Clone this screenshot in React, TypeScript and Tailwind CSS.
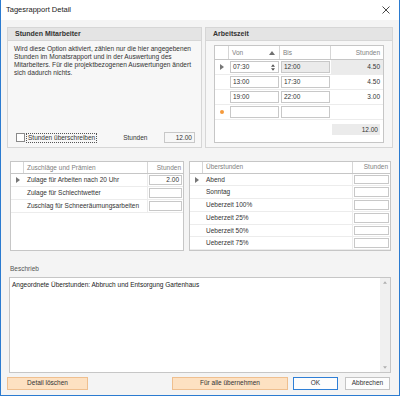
import React from "react";

const font = { fontFamily: '"Liberation Sans", Arial, sans-serif' };

function Tri({ dir = "right", className = "" }: { dir?: "right" | "up" | "down"; className?: string }) {
  const pts = dir === "right" ? "0,0 4,3 0,6" : dir === "up" ? "0,4 3,0 6,4" : "0,0 6,0 3,4";
  const w = dir === "right" ? 4 : 6;
  const h = dir === "right" ? 6 : 4;
  return (
    <svg width={w} height={h} viewBox={`0 0 ${w} ${h}`} className={className}>
      <polygon points={pts} fill="currentColor" />
    </svg>
  );
}

function GroupBox({ title, className = "", children }: { title: string; className?: string; children: React.ReactNode }) {
  return (
    <div className={`flex flex-col border border-[#d6d6d6] bg-[#f7f7f7] ${className}`}>
      <div className="h-[13px] flex items-center pl-[7px] bg-[#e4e4e4] border-b border-[#d6d6d6] text-[7px] font-bold text-[#333]">
        {title}
      </div>
      {children}
    </div>
  );
}

const times = [
  { von: "07:30", bis: "12:00", h: "4.50", sel: true },
  { von: "13:00", bis: "17:30", h: "4.50" },
  { von: "19:00", bis: "22:00", h: "3.00" },
];

function Arbeitszeit() {
  return (
    <div className="mx-[8px] mt-[4px] border border-[#c6c6c6] bg-white flex flex-col h-[98px]">
      <div className="flex h-[14px] border-b border-[#c6c6c6] text-[6.5px] text-[#808080]">
        <div className="w-[14px] border-r border-[#d6d6d6]" />
        <div className="w-[51px] border-r border-[#d6d6d6] flex items-center justify-between pl-[3px] pr-[4px]">
          <span>Von</span>
          <Tri dir="up" className="text-[#707070]" />
        </div>
        <div className="w-[51px] border-r border-[#d6d6d6] flex items-center pl-[3px]">Bis</div>
        <div className="flex-1 flex items-center justify-end pr-[3px]">Stunden</div>
      </div>
      {times.map((t) => (
        <div key={t.von} className="flex h-[15px] border-b border-[#ececec] text-[6.5px] text-[#333]">
          <div className="w-[14px] flex items-center justify-center text-[#777]">{t.sel && <Tri />}</div>
          <div className="w-[51px] p-[1px]">
            <div className="h-full border border-[#c8c8c8] bg-white flex items-center justify-between pl-[2px] pr-[3px]">
              <span>{t.von}</span>
              {t.sel && (
                <span className="flex flex-col gap-[1px] text-[#555]">
                  <Tri dir="up" className="w-[4px] h-[3px]" />
                  <Tri dir="down" className="w-[4px] h-[3px]" />
                </span>
              )}
            </div>
          </div>
          <div className="w-[51px] p-[1px]">
            <div className={`h-full border border-[#c8c8c8] flex items-center pl-[2px] ${t.sel ? "bg-[#ebebeb]" : "bg-white"}`}>
              {t.bis}
            </div>
          </div>
          <div className={`flex-1 flex items-center justify-end pr-[3px] ${t.sel ? "bg-[#ebebeb]" : ""}`}>{t.h}</div>
        </div>
      ))}
      <div className="flex h-[15px] border-b border-[#ececec] text-[6.5px]">
        <div className="w-[14px] flex items-center justify-center">
          <span className="w-[4px] h-[4px] rounded-full bg-[#f59a3c]" />
        </div>
        <div className="w-[51px] p-[1px]">
          <div className="h-full border border-[#c8c8c8] bg-white" />
        </div>
        <div className="w-[51px] p-[1px]">
          <div className="h-full border border-[#c8c8c8] bg-white" />
        </div>
        <div className="flex-1" />
      </div>
      <div className="flex-1 flex justify-end pt-[4px] pr-[3px]">
        <div className="w-[48px] h-[11px] bg-[#ebebeb] flex items-center justify-end pr-[2px] text-[6.5px] text-[#333]">
          12.00
        </div>
      </div>
    </div>
  );
}

function ListGrid({
  title,
  rows,
  nameW,
  className = "",
}: {
  title: string;
  rows: { name: string; h?: string }[];
  nameW: string;
  className?: string;
}) {
  return (
    <div className={`border border-[#c6c6c6] bg-white flex flex-col h-[90px] ${className}`}>
      <div className="flex h-[12px] border-b border-[#c6c6c6] text-[6.5px] text-[#808080]">
        <div className="w-[13px] border-r border-[#d6d6d6]" />
        <div className={`${nameW} border-r border-[#d6d6d6] flex items-center pl-[3px]`}>{title}</div>
        <div className="flex-1 flex items-center justify-end pr-[2px]">Stunden</div>
      </div>
      {rows.map((r, i) => (
        <div key={r.name} className="flex h-[13px] border-b border-[#ececec] text-[6.5px] text-[#333]">
          <div className="w-[13px] flex items-center justify-center text-[#777]">{i === 0 && <Tri />}</div>
          <div className={`${nameW} border-r border-[#ececec] flex items-center pl-[3px]`}>{r.name}</div>
          <div className="flex-1 p-[1px]">
            <div className="h-full border border-[#c8c8c8] bg-white flex items-center justify-end pr-[2px]">{r.h}</div>
          </div>
        </div>
      ))}
    </div>
  );
}

export default function App() {
  return (
    <div style={font} className="w-[400px] h-[396px] bg-[#f4f4f4] border-x border-b border-[#2b7bd0] flex flex-col text-[#333]">
      <div className="h-[20px] bg-white flex items-center justify-between pl-[5px] pr-[9px]">
        <span className="text-[7.5px] text-[#222]">Tagesrapport Detail</span>
        <svg width="8" height="8" viewBox="0 0 8 8" className="text-[#333]">
          <path d="M0.5 0.5 L7.5 7.5 M7.5 0.5 L0.5 7.5" stroke="currentColor" strokeWidth="0.9" />
        </svg>
      </div>

      <div className="flex-1 flex flex-col px-[6px] pt-[7px]">
        <div className="flex gap-[3px] h-[121px]">
          <GroupBox title="Stunden Mitarbeiter" className="w-[195px]">
            <div className="flex-1 flex flex-col justify-between px-[6px] pt-[4px] pb-[4px]">
              <p className="text-[6.6px] leading-[8px] text-[#333]">
                Wird diese Option aktiviert, zählen nur die hier angegebenen
                <br />
                Stunden im Monatsrapport und in der Auswertung des
                <br />
                Mitarbeiters. Für die projektbezogenen Auswertungen ändert
                <br />
                sich dadurch nichts.
              </p>
              <div className="flex items-center h-[11px] pl-[2px] text-[6.5px]">
                <span className="w-[9px] h-[9px] border border-[#8a8a8a] bg-white" />
                <span className="ml-[1px] h-[10px] px-[1px] border border-dotted border-[#555] flex items-center">
                  Stunden überschreiben
                </span>
                <span className="ml-[26px]">Stunden</span>
                <span className="ml-auto w-[31px] h-[11px] border border-[#c8c8c8] bg-[#f7f7f7] flex items-center justify-end pr-[2px]">
                  12.00
                </span>
              </div>
            </div>
          </GroupBox>
          <GroupBox title="Arbeitszeit" className="w-[188px]">
            <Arbeitszeit />
          </GroupBox>
        </div>

        <div className="flex justify-between mt-[13px] pl-[3px] pr-[2px]">
          <ListGrid
            title="Zuschläge und Prämien"
            nameW="w-[124px]"
            className="w-[174px]"
            rows={[
              { name: "Zulage für Arbeiten nach 20 Uhr", h: "2.00" },
              { name: "Zulage für Schlechtwetter" },
              { name: "Zuschlag für Schneeräumungsarbeiten" },
            ]}
          />
          <ListGrid
            title="Überstunden"
            nameW="w-[150px]"
            className="w-[202px]"
            rows={[
              { name: "Abend" },
              { name: "Sonntag" },
              { name: "Ueberzeit 100%" },
              { name: "Ueberzeit 25%" },
              { name: "Ueberzeit 50%" },
              { name: "Ueberzeit 75%" },
            ]}
          />
        </div>

        <div className="mt-[13px] pl-[3px] text-[6.5px] text-[#555]">Beschrieb</div>
        <div className="mt-[3px] ml-[2px] mr-[2px] h-[96px] border border-[#c6c6c6] bg-white flex">
          <div className="flex-1 pl-[2px] pt-[2px] text-[6.5px] text-[#222]">
            Angeordnete Überstunden: Abbruch und Entsorgung Gartenhaus
          </div>
          <div className="w-[10px] bg-[#f0f0f0] flex flex-col items-center justify-between py-[3px] text-[#b0b0b0]">
            <Tri dir="up" className="w-[4px] h-[3px]" />
            <Tri dir="down" className="w-[4px] h-[3px]" />
          </div>
        </div>

        <div className="mt-[4px] flex items-center text-[6.5px]">
          <button className="w-[81px] h-[13px] bg-[#fde1c2] border border-[#efbf8f] text-[#333]">Detail löschen</button>
          <button className="ml-[84px] w-[116px] h-[13px] bg-[#fde1c2] border border-[#efbf8f] text-[#333]">
            Für alle übernehmen
          </button>
          <button className="ml-[5px] w-[45px] h-[13px] bg-[#fdfdfd] border border-[#2f7fd6] text-[#333]">OK</button>
          <button className="ml-[7px] w-[45px] h-[13px] bg-[#fdfdfd] border border-[#c4c4c4] text-[#333]">Abbrechen</button>
        </div>
      </div>
    </div>
  );
}
